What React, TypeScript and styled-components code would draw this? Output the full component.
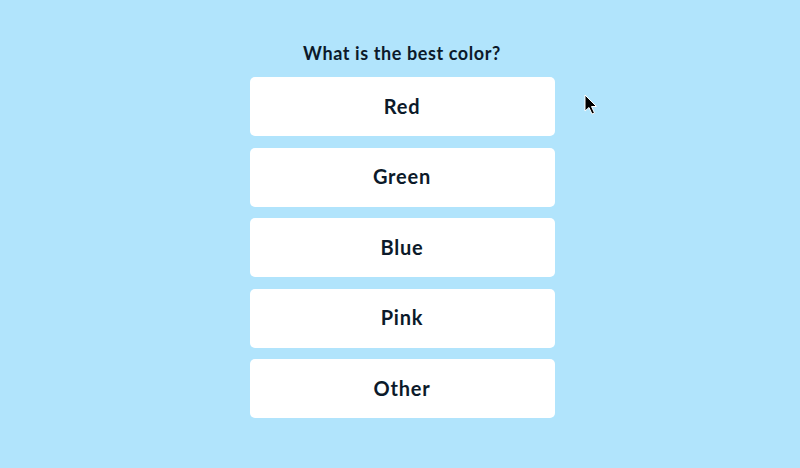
import React from "react";
import styled, { createGlobalStyle } from "styled-components";

const Global = createGlobalStyle`
  html, body { margin: 0; padding: 0; background: #b1e4fc; }
  body { font-family: Lato, "Open Sans", sans-serif; }
`;

const Page = styled.div`
  position: relative;
  width: 800px;
  height: 468px;
  background: #b1e4fc;
  display: flex;
  flex-direction: column;
  align-items: center;
  padding-top: 42px;
  box-sizing: border-box;
`;

const Title = styled.h1`
  margin: 0 0 12px 4px;
  font-size: 18px;
  line-height: 23px;
  font-weight: 700;
  color: #0c1a2a;
  letter-spacing: 0.6px;
`;

const List = styled.div`
  display: flex;
  flex-direction: column;
  gap: 11.5px;
  margin-left: 4px;
`;

const Option = styled.button`
  width: 305px;
  height: 59px;
  border: none;
  border-radius: 5px;
  background: #ffffff;
  font-family: Lato, "Open Sans", sans-serif;
  font-size: 20px;
  font-weight: 700;
  color: #0c1a2a;
  letter-spacing: 0.8px;
  cursor: pointer;
  padding: 0 0 2px;
`;

const Cursor = styled.svg`
  position: absolute;
  left: 584px;
  top: 94px;
`;

const options = ["Red", "Green", "Blue", "Pink", "Other"];

export default function App() {
  return (
    <>
      <Global />
      <Page>
        <Title>What is the best color?</Title>
        <List>
          {options.map((o) => (
            <Option key={o}>{o}</Option>
          ))}
        </List>
        <Cursor width="14" height="22" viewBox="0 0 14 22">
          <path
            d="M1 1 L1 17 L5 13.5 L8 20 L10.5 19 L7.5 12.5 L12.5 12.5 Z"
            fill="#000"
            stroke="#fff"
            strokeWidth="1"
            strokeLinejoin="round"
          />
        </Cursor>
      </Page>
    </>
  );
}
